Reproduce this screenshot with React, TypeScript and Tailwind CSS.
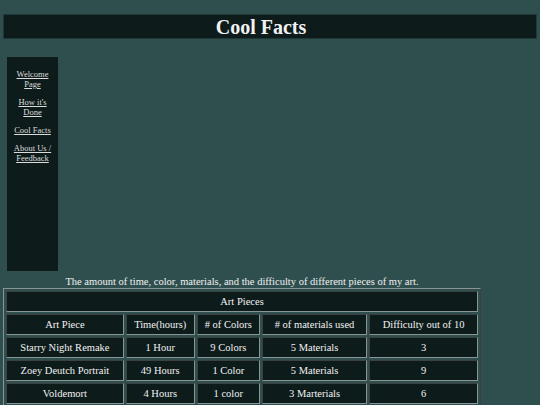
import React from 'react';

const rows = [
  ['Starry Night Remake', '1 Hour', '9 Colors', '5 Materials', '3'],
  ['Zoey Deutch Portrait', '49 Hours', '1 Color', '5 Materials', '9'],
  ['Voldemort', '4 Hours', '1 color', '3 Marterials', '6'],
];

const links = [['Welcome', 'Page'], ['How it\'s', 'Done'], ['Cool Facts'], ['About Us /', 'Feedback']];

const cell = 'h-[21px] p-0 text-center font-normal border border-[#8a9494] [border-style:inset] bg-[#0d1b1b]';

const App: React.FC = () => {
  return (
    <div className="h-[405px] bg-[#2f4f4f] text-[#f2f2f2] font-['Liberation_Serif',serif] pt-[14px] overflow-hidden">
      {/* Header */}
      <div className="mx-[3px] h-[25px] bg-[#0d1b1b] border border-[#1f3838] flex items-center justify-center pr-[18px]">
        <h1 className="text-[20px] font-bold leading-none">Cool Facts</h1>
      </div>

      {/* Sidebar */}
      <nav className="mt-[18px] ml-[7px] w-[51px] h-[214px] bg-[#0d1b1b] pt-[12px] flex flex-col items-center gap-[8px] text-[8.5px] leading-[10px] text-center">
        {links.map((l, i) => (
          <a key={i} href="#" className="underline text-[#dcdcdc]">
            {l.map((t, j) => (
              <div key={j}>{t}</div>
            ))}
          </a>
        ))}
      </nav>

      {/* Table area */}
      <div className="ml-[3px] w-[478px] mt-[5px] text-center">
        <p className="text-[10.5px] leading-[12px] text-[#f0f0f0]">
          The amount of time, color, materials, and the difficulty of different pieces of my art.
        </p>
        <table className="w-[478px] border-separate border-spacing-[2px] border border-[#8a9494] [border-style:outset] text-[10.5px]">
          <thead>
            <tr>
              <th colSpan={5} className={cell}>Art Pieces</th>
            </tr>
            <tr>
              <th className={`${cell} w-[119px]`}>Art Piece</th>
              <th className={`${cell} w-[69px]`}>Time(hours)</th>
              <th className={`${cell} w-[64px]`}># of Colors</th>
              <th className={`${cell} w-[106px]`}># of materials used</th>
              <th className={`${cell} w-[110px]`}>Difficulty out of 10</th>
            </tr>
          </thead>
          <tbody>
            {rows.map((r, i) => (
              <tr key={i}>
                {r.map((c, j) => (
                  <td key={j} className={cell}>{c}</td>
                ))}
              </tr>
            ))}
          </tbody>
        </table>
      </div>
    </div>
  );
};

export default App;
